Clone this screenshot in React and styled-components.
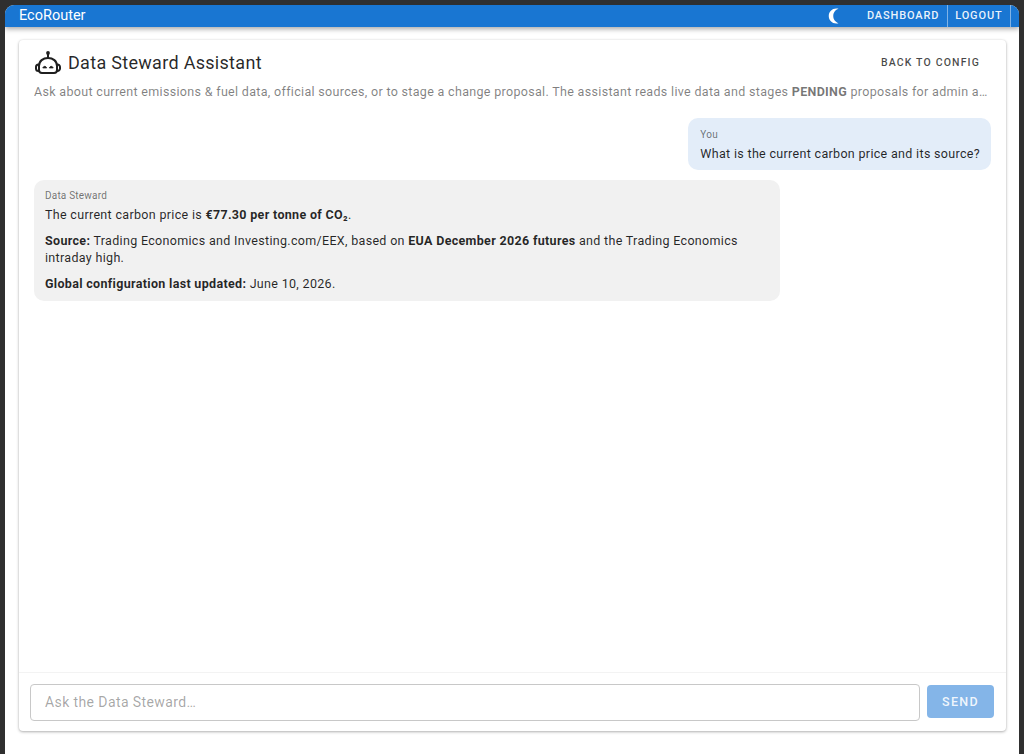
import React from "react";
import styled, { createGlobalStyle } from "styled-components";

const GlobalStyle = createGlobalStyle`
  html, body {
    margin: 0;
    height: 100%;
    background: #2f2f2f;
    font-family: Roboto, "Liberation Sans", sans-serif;
  }
  #root {
    height: 100%;
  }
`;

const Frame = styled.div`
  box-sizing: border-box;
  height: 754px;
  padding: 5px 5px 0 5px;
  background: #2f2f2f;
  overflow: hidden;
`;

const Window = styled.div`
  height: 100%;
  display: flex;
  flex-direction: column;
  background: #fff;
  border-radius: 9px 9px 0 0;
  overflow: hidden;
`;

const AppBar = styled.header`
  flex: none;
  height: 22px;
  display: flex;
  align-items: center;
  padding: 0 8px 0 14px;
  background: #1976d2;
  color: #fff;
  box-shadow: 0 2px 5px rgba(0, 0, 0, 0.35);
  position: relative;
`;

const Brand = styled.div`
  flex: 1;
  font-size: 14.5px;
  line-height: 22px;
`;

const MoonButton = styled.span`
  display: flex;
  margin-right: 16px;
`;

const NavLink = styled.span`
  height: 100%;
  display: flex;
  align-items: center;
  padding: 0 7.5px 1px;
  box-sizing: border-box;
  font-size: 11px;
  font-weight: 500;
  letter-spacing: 0.85px;
  color: rgba(255, 255, 255, 0.92);
  border-right: 1px solid rgba(255, 255, 255, 0.45);
`;

const Content = styled.main`
  flex: 1;
  min-height: 0;
  display: flex;
  padding: 13px 13px 23px 14px;
`;

const Card = styled.section`
  flex: 1;
  min-width: 0;
  display: flex;
  flex-direction: column;
  background: #fff;
  border-radius: 4px;
  box-shadow: 0 1px 3px rgba(0, 0, 0, 0.3), 0 0 2px rgba(0, 0, 0, 0.08);
`;

const CardHead = styled.div`
  flex: none;
  padding: 9px 15px 0;
`;

const TitleRow = styled.div`
  height: 26px;
  display: flex;
  align-items: center;
  gap: 6px;
`;

const Title = styled.h1`
  flex: 1;
  margin: 0;
  font-size: 18px;
  font-weight: 400;
  letter-spacing: 0.3px;
  color: rgba(0, 0, 0, 0.85);
`;

const BackButton = styled.span`
  margin-right: 11px;
  font-size: 10.5px;
  font-weight: 500;
  letter-spacing: 1.15px;
  color: rgba(0, 0, 0, 0.72);
`;

const Intro = styled.p`
  margin: 8px 0 0;
  font-size: 12.5px;
  line-height: 18px;
  letter-spacing: 0.32px;
  color: rgba(0, 0, 0, 0.5);
  white-space: nowrap;
  overflow: hidden;
  text-overflow: ellipsis;
  strong {
    font-weight: 700;
    color: rgba(0, 0, 0, 0.55);
  }
`;

const Messages = styled.div`
  flex: 1;
  min-height: 0;
  display: flex;
  flex-direction: column;
  gap: 10px;
  padding: 17px 15px 0;
`;

const Bubble = styled.div`
  box-sizing: border-box;
  max-width: 746px;
  align-self: ${(p) => (p.$mine ? "flex-end" : "flex-start")};
  width: ${(p) => (p.$mine ? "auto" : "746px")};
  padding: ${(p) => (p.$mine ? "10px 11px 7px 12px" : "9px 11px 8px")};
  border-radius: 10px;
  background: ${(p) => (p.$mine ? "#e3edf9" : "#f1f1f1")};
  color: rgba(0, 0, 0, 0.85);
`;

const Sender = styled.div`
  font-size: 10px;
  line-height: 14px;
  letter-spacing: 0.2px;
  color: rgba(0, 0, 0, 0.55);
`;

const MessageText = styled.p`
  margin: 3px 0 0;
  font-size: 12.5px;
  line-height: 17.5px;
  letter-spacing: 0.32px;
  & + & {
    margin-top: 8.6px;
  }
`;

const Composer = styled.form`
  flex: none;
  display: flex;
  align-items: center;
  gap: 7px;
  height: 58px;
  padding: 0 12px 0 11px;
  border-top: 1px solid #f3f3f3;
`;

const AskInput = styled.input`
  flex: 1;
  min-width: 0;
  box-sizing: border-box;
  height: 37px;
  padding: 0 14px 1px;
  border: 1px solid #c8c8c8;
  border-radius: 4px;
  font: 400 14px Roboto, sans-serif;
  letter-spacing: 0.4px;
  outline: none;
  &::placeholder {
    color: rgba(0, 0, 0, 0.36);
    opacity: 1;
  }
`;

const SendButton = styled.button`
  flex: none;
  width: 67px;
  height: 33px;
  margin-bottom: 1px;
  border: 0;
  border-radius: 4px;
  background: #84b5e8;
  color: rgba(255, 255, 255, 0.9);
  font: 500 12.5px Roboto, sans-serif;
  letter-spacing: 1.3px;
`;

const MoonIcon = () => (
  <svg width="18" height="18" viewBox="0 0 24 24" fill="#fff" style={{ transform: "scaleX(-1)" }}>
    <path d="M9 2c-1.05 0-2.05.16-3 .46 4.06 1.27 7 5.06 7 9.54 0 4.48-2.94 8.27-7 9.54.95.3 1.95.46 3 .46 5.52 0 10-4.48 10-10S14.52 2 9 2z" />
  </svg>
);

const RobotIcon = () => (
  <svg width="28" height="26" viewBox="0 0 28 26" fill="none" stroke="#1f1f1f" strokeWidth="2">
    <circle cx="14" cy="4" r="1.9" fill="#1f1f1f" stroke="none" />
    <path d="M14 5v4" />
    <path d="M5 17C5 12 9 9 14 9s9 3 9 8v4q0 3-3 3H8q-3 0-3-3z" strokeLinejoin="round" />
    <path d="M5 15.500h-.5A2.500 2.500 0 0 0 2 18v1.500A2.500 2.500 0 0 0 4.500 22H5" />
    <path d="M23 15.500h.5A2.500 2.500 0 0 1 26 18v1.500A2.500 2.500 0 0 1 23.500 22H23" />
    <path d="M8.800 19c.5-2.200 3.400-2.200 3.900 0zM15.300 19c.5-2.200 3.400-2.200 3.900 0z" fill="#1f1f1f" strokeWidth="0.7" />
  </svg>
);

export default function App() {
  return (
    <>
      <GlobalStyle />
      <Frame>
        <Window>
          <AppBar>
            <Brand>EcoRouter</Brand>
            <MoonButton>
              <MoonIcon />
            </MoonButton>
            <NavLink>DASHBOARD</NavLink>
            <NavLink>LOGOUT</NavLink>
          </AppBar>
          <Content>
            <Card>
              <CardHead>
                <TitleRow>
                  <RobotIcon />
                  <Title>Data Steward Assistant</Title>
                  <BackButton>BACK TO CONFIG</BackButton>
                </TitleRow>
                <Intro>
                  Ask about current emissions &amp; fuel data, official sources, or to stage a change proposal. The assistant
                  reads live data and stages <strong>PENDING</strong> proposals for admin approval before anything changes.
                </Intro>
              </CardHead>
              <Messages>
                <Bubble $mine>
                  <Sender>You</Sender>
                  <MessageText>What is the current carbon price and its source?</MessageText>
                </Bubble>
                <Bubble>
                  <Sender>Data Steward</Sender>
                  <MessageText>
                    The current carbon price is <strong>€77.30 per tonne of CO₂</strong>.
                  </MessageText>
                  <MessageText>
                    <strong>Source:</strong> Trading Economics and Investing.com/EEX, based on{" "}
                    <strong>EUA December 2026 futures</strong> and the Trading Economics intraday high.
                  </MessageText>
                  <MessageText>
                    <strong>Global configuration last updated:</strong> June 10, 2026.
                  </MessageText>
                </Bubble>
              </Messages>
              <Composer>
                <AskInput placeholder="Ask the Data Steward…" />
                <SendButton type="button">SEND</SendButton>
              </Composer>
            </Card>
          </Content>
        </Window>
      </Frame>
    </>
  );
}
